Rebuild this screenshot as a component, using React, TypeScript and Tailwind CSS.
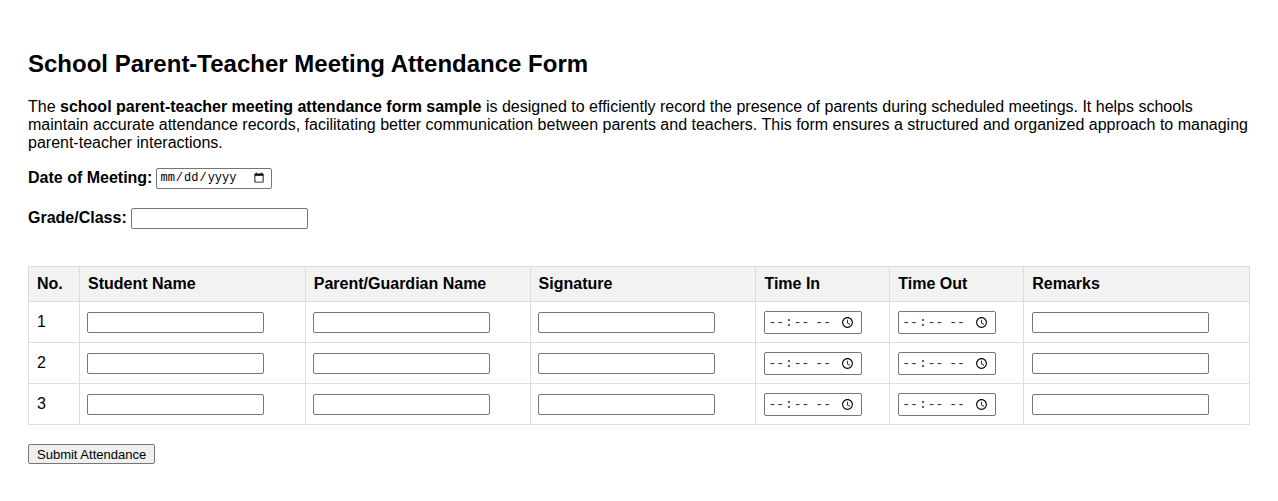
import React from "react"

const rows = [1, 2, 3]

const textInput =
  "h-[21px] w-[177px] border border-[#767676] rounded-[2px] bg-white px-[2px] text-[13px] align-middle"
const timeInput =
  "h-[23px] w-[98px] border border-[#767676] rounded-[2px] bg-white pl-[2px] pr-[4px] text-[13px] align-middle [font-family:'Liberation_Mono',monospace] text-[#333]"

export default function App() {
  return (
    <div className="bg-white px-[28px] pt-[28px] pb-[20px] text-black text-[16px] [font-family:Arial,'Liberation_Sans',sans-serif]">
      <h2 className="mt-[22px] mb-[20px] text-[24px] font-bold leading-[28px]">
        School Parent-Teacher Meeting Attendance Form
      </h2>

      <p className="mb-[15px] leading-[18px]">
        The <strong>school parent-teacher meeting attendance form sample</strong> is designed to efficiently record the
        presence of parents during scheduled meetings. It helps schools maintain accurate attendance records, facilitating
        better communication between parents and teachers. This form ensures a structured and organized approach to
        managing parent-teacher interactions.
      </p>

      <form onSubmit={(e) => e.preventDefault()}>
        <div className="flex items-center gap-[4px] h-[22px]">
          <label className="font-bold">Date of Meeting:</label>
          <input
            type="date"
            className="h-[21px] w-[116px] border border-[#767676] rounded-[2px] bg-white pl-[2px] pr-[4px] text-[12px] [font-family:'Liberation_Mono',monospace]"
          />
        </div>

        <div className="flex items-center gap-[4px] h-[22px] mt-[18px]">
          <label className="font-bold">Grade/Class:</label>
          <input type="text" className={textInput} />
        </div>

        <table className="mt-[37px] w-full border-collapse text-left">
          <colgroup>
            <col className="w-[51px]" />
            <col className="w-[226px]" />
            <col className="w-[225px]" />
            <col className="w-[226px]" />
            <col className="w-[134px]" />
            <col className="w-[134px]" />
            <col className="w-[226px]" />
          </colgroup>
          <thead>
            <tr className="bg-[#f2f2f2]">
              {["No.", "Student Name", "Parent/Guardian Name", "Signature", "Time In", "Time Out", "Remarks"].map((h) => (
                <th key={h} className="border border-[#dddddd] px-[8px] h-[35px] font-bold leading-[18px]">
                  {h}
                </th>
              ))}
            </tr>
          </thead>
          <tbody>
            {rows.map((n) => (
              <tr key={n}>
                <td className="border border-[#dddddd] px-[8px] h-[41px] align-middle">{n}</td>
                <td className="border border-[#dddddd] pl-[7px] pr-[8px] align-middle">
                  <input type="text" className={textInput} />
                </td>
                <td className="border border-[#dddddd] pl-[7px] pr-[8px] align-middle">
                  <input type="text" className={textInput} />
                </td>
                <td className="border border-[#dddddd] pl-[7px] pr-[8px] align-middle">
                  <input type="text" className={textInput} />
                </td>
                <td className="border border-[#dddddd] px-[8px] align-middle">
                  <input type="time" className={timeInput} />
                </td>
                <td className="border border-[#dddddd] px-[8px] align-middle">
                  <input type="time" className={timeInput} />
                </td>
                <td className="border border-[#dddddd] px-[8px] align-middle">
                  <input type="text" className={textInput} />
                </td>
              </tr>
            ))}
          </tbody>
        </table>

        <button
          type="submit"
          className="mt-[19px] h-[20px] px-[8px] border border-[#767676] rounded-[2px] bg-[#efefef] text-[13px] leading-[15px]"
        >
          Submit Attendance
        </button>
      </form>
    </div>
  )
}
